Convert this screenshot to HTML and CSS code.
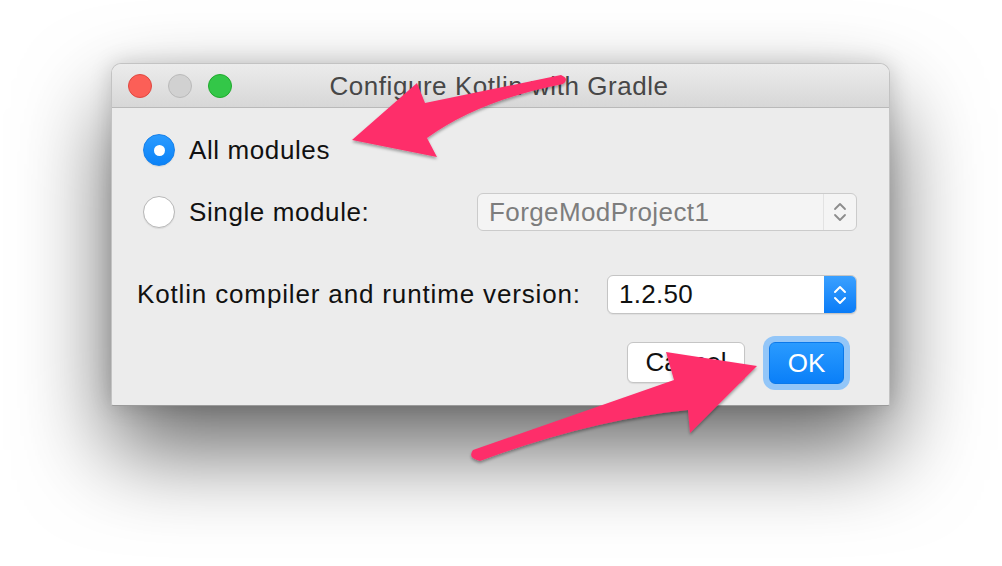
FILE: index.html
```html
<!DOCTYPE html>
<html>
<head>
<meta charset="utf-8">
<title>Configure Kotlin with Gradle</title>
<link rel="stylesheet" href="styles.css">
</head>
<body>
<div class="stage">
  <div class="window">
    <div class="titlebar">
      <div class="lights">
        <span class="light red"></span>
        <span class="light gray"></span>
        <span class="light green"></span>
      </div>
      <div class="title">Configure Kotlin with Gradle</div>
      <div class="spacer"></div>
    </div>
    <div class="content">
      <div class="row row-all">
        <span class="radio checked"></span>
        <span class="label">All modules</span>
      </div>
      <div class="row row-single">
        <span class="radio"></span>
        <span class="label">Single module:</span>
        <div class="combo combo-disabled">
          <span class="combo-text">ForgeModProject1</span>
          <span class="stepper">
            <svg width="14" height="22" viewBox="0 0 14 22"><path d="M2 8 L7 3 L12 8 M2 14 L7 19 L12 14" fill="none" stroke="#8c8c8c" stroke-width="1.8" stroke-linecap="round" stroke-linejoin="round"/></svg>
          </span>
        </div>
      </div>
      <div class="row row-version">
        <span class="label label-version">Kotlin compiler and runtime version:</span>
        <div class="combo combo-version">
          <span class="combo-text">1.2.50</span>
          <span class="stepper stepper-blue">
            <svg width="14" height="22" viewBox="0 0 14 22"><path d="M2 8 L7 3 L12 8 M2 14 L7 19 L12 14" fill="none" stroke="#ffffff" stroke-width="2" stroke-linecap="round" stroke-linejoin="round"/></svg>
          </span>
        </div>
      </div>
      <div class="buttons">
        <button class="btn btn-cancel">Cancel</button>
        <button class="btn btn-ok">OK</button>
      </div>
    </div>
  </div>
  <svg class="annotations" width="1002" height="566" viewBox="0 0 1002 566">
    <defs>
      <filter id="ds" x="-10%" y="-10%" width="120%" height="130%">
        <feDropShadow dx="0" dy="2" stdDeviation="1.5" flood-color="#000" flood-opacity="0.35"/>
      </filter>
    </defs>
    <path filter="url(#ds)" fill="#fe2e6b" d="M561 75 L425 103 L417 83 L352 140 L437 157 L427 138 Q480 100 563 84 Q570 79 561 75 Z"/>
    <path filter="url(#ds)" fill="#fe2e6b" d="M473 450 L674 380 L666 352 L757 366 L690 433 L688 410 Q590 420 480 461 Q467 458 473 450 Z"/>
  </svg>
</div>
</body>
</html>
```
FILE: styles.css
```css
* { box-sizing: border-box; }
html, body { margin: 0; padding: 0; background: #ffffff; }
body {
  font-family: "Liberation Sans", Arial, sans-serif;
  color: #111111;
}
.stage {
  position: relative;
  width: 1002px;
  height: 566px;
  padding: 63px 0 0 111px;
  overflow: hidden;
}
.window {
  width: 779px;
  height: 343px;
  background: #ececec;
  border: 1px solid #c3c3c3;
  border-bottom-color: #9a9a9a;
  border-radius: 10px 10px 2px 2px;
  box-shadow: 0 44px 90px rgba(0, 0, 0, 0.6), 0 0 22px rgba(0, 0, 0, 0.16);
  display: flex;
  flex-direction: column;
}
.titlebar {
  height: 44px;
  border-bottom: 1px solid #b9b9b9;
  border-radius: 9px 9px 0 0;
  background: linear-gradient(#ececec, #d7d7d7);
  display: grid;
  grid-template-columns: 1fr auto 1fr;
  align-items: center;
}
.lights {
  display: flex;
  gap: 16px;
  padding-left: 16px;
}
.light {
  width: 24px;
  height: 24px;
  border-radius: 50%;
  border: 1px solid;
}
.light.red { background: #fc5f57; border-color: #df4840; }
.light.gray { background: #d1d1d1; border-color: #bababa; }
.light.green { background: #33c748; border-color: #1faa2c; }
.title {
  font-size: 26px;
  letter-spacing: 0.55px;
  color: #474747;
  padding-top: 1px;
  margin-left: -3px;
}
.content {
  flex: 1;
  display: flex;
  flex-direction: column;
  padding: 0 32px 0 25px;
}
.row {
  display: flex;
  align-items: center;
}
.label {
  font-size: 26px;
  letter-spacing: 0.6px;
  color: #111111;
}
.label-version {
  letter-spacing: 0.85px;
}
.row-all {
  margin-top: 26px;
  height: 32px;
  padding-left: 6px;
  gap: 14px;
}
.row-single {
  margin-top: 27px;
  height: 38px;
  padding-left: 6px;
  gap: 14px;
}
.row-version {
  margin-top: 44px;
  height: 39px;
}
.radio {
  width: 32px;
  height: 32px;
  border-radius: 50%;
  background: #ffffff;
  border: 1px solid #b8b8b8;
  box-shadow: 0 1px 1px rgba(0, 0, 0, 0.08);
  display: flex;
  align-items: center;
  justify-content: center;
  flex: none;
}
.radio.checked {
  background: linear-gradient(#2a9bff, #0b82f7);
  border-color: #1680ea;
}
.radio.checked::after {
  content: "";
  width: 11px;
  height: 11px;
  border-radius: 50%;
  background: #ffffff;
}
.combo {
  margin-left: auto;
  display: flex;
  align-items: stretch;
  border-radius: 6px;
  border: 1px solid #c7c7c7;
  overflow: hidden;
}
.combo-text {
  flex: 1;
  font-size: 26px;
  display: flex;
  align-items: center;
  padding-left: 11px;
}
.stepper {
  width: 33px;
  display: flex;
  align-items: center;
  justify-content: center;
}
.combo-disabled {
  width: 380px;
  height: 38px;
  background: #f4f4f4;
  border-color: #cbcbcb;
}
.combo-disabled .combo-text {
  color: #7d7d7d;
  letter-spacing: 0.4px;
}
.combo-disabled .stepper {
  border-left: 1px solid #e2e2e2;
}
.combo-version {
  width: 250px;
  height: 39px;
  background: #ffffff;
  border-color: #c4c4c4;
  box-shadow: 0 1px 1px rgba(0, 0, 0, 0.06);
}
.combo-version .combo-text {
  color: #111111;
  letter-spacing: 0.3px;
}
.stepper-blue {
  width: 32px;
  background: linear-gradient(#3aa0ff, #0a7cf7);
}
.buttons {
  margin-top: 28px;
  display: flex;
  justify-content: flex-end;
  gap: 24px;
  padding-right: 13px;
}
.btn {
  font-family: "Liberation Sans", Arial, sans-serif;
  font-size: 26px;
  border-radius: 6px;
  padding: 0;
  cursor: default;
}
.btn-cancel {
  width: 118px;
  height: 41px;
  background: #ffffff;
  border: 1px solid #c5c5c5;
  color: #111111;
  box-shadow: 0 1px 1px rgba(0, 0, 0, 0.08);
}
.btn-ok {
  width: 75px;
  height: 42px;
  color: #ffffff;
  border: 1px solid #0b79ea;
  background: linear-gradient(#2a9bff, #0a7ff8);
  box-shadow: 0 0 0 6px #93c6f8;
}
.annotations {
  position: absolute;
  left: 0;
  top: 0;
  pointer-events: none;
}
```
